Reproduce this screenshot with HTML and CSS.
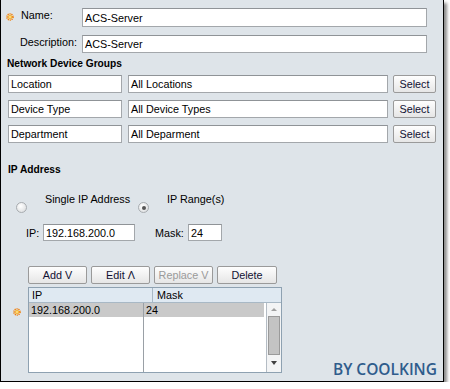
FILE: index.html
```html
<!DOCTYPE html>
<html>
<head>
<meta charset="utf-8">
<link rel="stylesheet" href="styles.css">
</head>
<body>
<div class="panel">
  <div class="row row-name">
    <svg class="req" width="8" height="8" viewBox="0 0 8 8"><circle cx="4" cy="4" r="3" fill="none" stroke="#f07a00" stroke-width="1.6" stroke-dasharray="1.1 0.8"/><circle cx="4" cy="4" r="2" fill="#f8b020"/><circle cx="4" cy="4" r="0.9" fill="#ffe9a0"/></svg>
    <span class="lbl lbl-name">Name:</span>
    <div class="field f-wide">ACS-Server</div>
  </div>
  <div class="row row-desc">
    <span class="lbl lbl-desc">Description:</span>
    <div class="field f-wide">ACS-Server</div>
  </div>

  <div class="sect sect-ndg">Network Device Groups</div>
  <div class="ndg">
    <div class="ndg-row"><div class="field f-key">Location</div><div class="field f-val">All Locations</div><button class="btn btn-sel">Select</button></div>
    <div class="ndg-row"><div class="field f-key">Device Type</div><div class="field f-val">All Device Types</div><button class="btn btn-sel">Select</button></div>
    <div class="ndg-row"><div class="field f-key">Department</div><div class="field f-val">All Deparment</div><button class="btn btn-sel">Select</button></div>
  </div>

  <div class="sect sect-ip">IP Address</div>
  <div class="radios">
    <span class="radio"></span>
    <span class="rlbl rlbl-1">Single IP Address</span>
    <span class="radio on"></span>
    <span class="rlbl rlbl-2">IP Range(s)</span>
  </div>
  <div class="ip-row">
    <span class="ip-lbl">IP:</span>
    <div class="field f-ip">192.168.200.0</div>
    <span class="mask-lbl">Mask:</span>
    <div class="field f-mask">24</div>
  </div>

  <div class="bottom">
    <div class="mark-col">
      <svg class="req" width="8" height="8" viewBox="0 0 8 8"><circle cx="4" cy="4" r="3" fill="none" stroke="#f07a00" stroke-width="1.6" stroke-dasharray="1.1 0.8"/><circle cx="4" cy="4" r="2" fill="#f8b020"/><circle cx="4" cy="4" r="0.9" fill="#ffe9a0"/></svg>
    </div>
    <div class="main-col">
      <div class="btns">
        <button class="btn tb">Add V</button>
        <button class="btn tb">Edit Λ</button>
        <button class="btn tb dis">Replace V</button>
        <button class="btn tb tb-del">Delete</button>
      </div>
      <div class="table">
        <div class="thead">
          <div class="th th-ip">IP</div>
          <div class="th th-mask">Mask</div>
        </div>
        <div class="tbody">
          <div class="list">
            <div class="col col-ip"><div class="cell sel">192.168.200.0</div></div>
            <div class="col col-mask"><div class="cell sel">24</div></div>
          </div>
          <div class="sbar">
            <div class="arr arr-up"></div>
            <div class="thumb"></div>
            <div class="arr arr-down"></div>
          </div>
        </div>
      </div>
    </div>
    <div class="brand">BY COOLKING</div>
  </div>
</div>
</body>
</html>
```

FILE: styles.css
```css
* { box-sizing: border-box; }
body {
  margin: 0;
  background: #fff;
  font-family: "Liberation Sans", Arial, sans-serif;
  font-size: 10.8px;
  color: #000;
}
.panel {
  width: 444px;
  height: 382px;
  background: #dee4e9;
  border-left: 1px solid #000;
  border-right: 1px solid #000;
  border-bottom: 1px solid #000;
  box-shadow: 3px 3px 3px rgba(0, 0, 0, 0.45);
  padding-top: 8px;
  display: flex;
  flex-direction: column;
}
.row {
  display: flex;
  align-items: flex-start;
}
.row-name { height: 19px; padding-left: 5px; }
.row-name .req { margin-top: 5px; margin-right: 0; }
.row-desc { height: 18px; margin-top: 8px; padding-left: 19px; }
.lbl { line-height: 12px; padding-top: 1px; }
.lbl-name { width: 61px; margin-left: 7px; }
.lbl-desc { width: 62px; }
.req { display: block; flex: none; }

.field {
  background: #fff;
  border: 1px solid #a3a7ab;
  border-top-color: #8f9397;
  padding: 0 2px;
  display: flex;
  align-items: center;
  white-space: nowrap;
  overflow: hidden;
  line-height: 12px;
}
.f-wide { width: 345px; height: 100%; }

.sect {
  font-weight: bold;
  font-size: 10.2px;
  line-height: 12px;
  padding-left: 6px;
}
.sect-ndg { margin-top: 5px; }
.ndg {
  display: flex;
  flex-direction: column;
  gap: 7px;
  margin-top: 5px;
  padding-left: 7px;
}
.ndg-row {
  display: flex;
  height: 18px;
}
.f-key { width: 114px; }
.f-val { width: 260px; margin-left: 6px; }
.btn {
  font-family: inherit;
  font-size: 10.8px;
  color: #111133;
  background: linear-gradient(#fefefe, #e6e6e6);
  border: 1px solid #9a9a9a;
  border-radius: 2px;
  padding: 0;
  line-height: 12px;
  height: 18px;
}
.btn-sel { width: 43px; margin-left: 5px; }

.sect-ip { margin-top: 21px; padding-left: 7px; }
.radios {
  display: flex;
  align-items: flex-start;
  margin-top: 17px;
  padding-left: 15px;
  height: 20px;
}
.radio {
  width: 11px;
  height: 11px;
  margin-top: 9px;
  border-radius: 50%;
  border: 1px solid #a8acb0;
  background: radial-gradient(circle at 40% 35%, #ffffff, #d6d8da);
  display: flex;
  align-items: center;
  justify-content: center;
  flex: none;
}
.radio.on::after {
  content: "";
  width: 4px;
  height: 4px;
  border-radius: 50%;
  background: #555;
}
.rlbl { line-height: 12px; }
.rlbl-1 { width: 93px; margin-left: 18px; }
.rlbl-2 { margin-left: 18px; }

.ip-row {
  display: flex;
  align-items: center;
  height: 17px;
  margin-top: 11px;
  padding-left: 25px;
}
.ip-lbl { width: 17px; }
.f-ip { width: 92px; height: 17px; }
.mask-lbl { width: 33px; margin-left: 20px; }
.f-mask { width: 34px; height: 17px; }

.bottom {
  display: flex;
  margin-top: 25px;
  padding-left: 12px;
}
.mark-col { width: 15px; }
.mark-col .req { margin-top: 42px; }
.main-col { display: flex; flex-direction: column; }
.btns { display: flex; gap: 4px; }
.tb { width: 59px; }
.tb-del { width: 60px; }
.tb.dis { color: #9a9a9a; }

.table {
  margin-top: 3px;
  width: 254px;
  border: 1px solid #8ea1b1;
}
.thead {
  display: flex;
  height: 15px;
  background: #dfe9f2;
  border-bottom: 1px solid #a8b8c5;
}
.th { line-height: 14px; }
.th-ip { width: 124px; padding-left: 3px; border-right: 1px solid #a8b8c5; }
.th-mask { padding-left: 4px; }
.tbody {
  display: flex;
  height: 69px;
  background: #fff;
}
.list { display: flex; width: 235px; }
.col-ip { width: 115px; border-right: 1px solid #9aa0a6; }
.col-mask { flex: 1; }
.cell { height: 14px; line-height: 14px; padding-left: 2px; }
.sel { background: #c9c9c9; }
.sbar {
  margin-left: 2px;
  width: 15px;
  border-left: 1px solid #b4bcc4;
  background: #f3f4f5;
  display: flex;
  flex-direction: column;
  align-items: center;
}
.arr { flex: none; width: 0; height: 0; border-left: 3px solid transparent; border-right: 3px solid transparent; }
.arr-up { margin-top: 5px; border-bottom: 3px solid #a0a0a0; }
.thumb {
  margin-top: 5px;
  width: 12px;
  height: 39px;
  background: #c3c3c3;
  border: 1px solid #9a9a9a;
}
.arr-down { margin-top: 6px; border-top: 4px solid #404040; }

.brand {
  margin-left: auto;
  margin-right: 6px;
  align-self: flex-end;
  margin-bottom: -6px;
  font-family: "Open Sans", "Noto Sans", sans-serif;
  font-weight: 600;
  font-size: 15.5px;
  line-height: 20px;
  color: #2f5c8c;
}
```
